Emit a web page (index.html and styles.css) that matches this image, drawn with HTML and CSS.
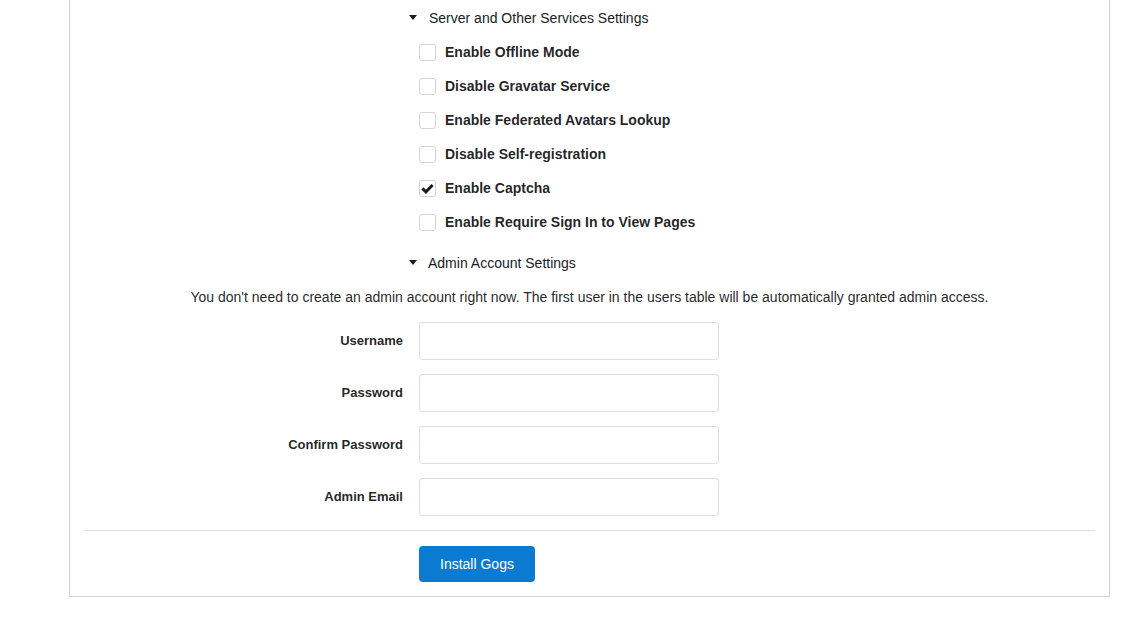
FILE: index.html
```html
<!DOCTYPE html>
<html>
<head>
<meta charset="utf-8">
<link rel="stylesheet" href="styles.css">
</head>
<body>
<div class="segment">
  <div class="section">
    <div class="summary"><span class="caret"></span><span>Server and Other Services Settings</span></div>
    <div class="checks">
      <div class="check"><span class="box"></span><span class="check-label">Enable Offline Mode</span></div>
      <div class="check"><span class="box"></span><span class="check-label">Disable Gravatar Service</span></div>
      <div class="check"><span class="box"></span><span class="check-label">Enable Federated Avatars Lookup</span></div>
      <div class="check"><span class="box"></span><span class="check-label">Disable Self-registration</span></div>
      <div class="check"><span class="box checked"><svg viewBox="0 0 17 17" width="17" height="17"><path d="M3.4 8.4 L6.9 11.9 L13.6 5.0" fill="none" stroke="#1b1c1d" stroke-width="3" stroke-linecap="butt" stroke-linejoin="miter"/></svg></span><span class="check-label">Enable Captcha</span></div>
      <div class="check"><span class="box"></span><span class="check-label">Enable Require Sign In to View Pages</span></div>
    </div>
  </div>
  <div class="section admin">
    <div class="summary"><span class="caret"></span><span>Admin Account Settings</span></div>
    <p class="help">You don't need to create an admin account right now. The first user in the users table will be automatically granted admin access.</p>
    <div class="fields">
      <div class="field"><label class="field-label">Username</label><input class="input" type="text"></div>
      <div class="field"><label class="field-label">Password</label><input class="input" type="password"></div>
      <div class="field"><label class="field-label">Confirm Password</label><input class="input" type="password"></div>
      <div class="field"><label class="field-label">Admin Email</label><input class="input" type="email"></div>
    </div>
  </div>
  <div class="divider"></div>
  <div class="actions"><button class="button">Install Gogs</button></div>
</div>
</body>
</html>
```
FILE: styles.css
```css
html, body {
  margin: 0;
  padding: 0;
  background: #ffffff;
}
body {
  font-family: "Liberation Sans", Arial, sans-serif;
  font-size: 14px;
  color: rgba(0, 0, 0, 0.87);
}
.segment {
  margin-left: 69px;
  width: 1041px;
  box-sizing: border-box;
  border: 1px solid #d4d4d5;
  border-top: none;
  padding: 8px 14px 14px;
}
.summary {
  display: flex;
  align-items: center;
  height: 20px;
  line-height: 20px;
  padding-left: 325px;
  color: #1b1c1d;
}
.caret {
  width: 0;
  height: 0;
  border-left: 4px solid transparent;
  border-right: 4px solid transparent;
  border-top: 5px solid #1b1c1d;
  margin-right: 12px;
  margin-top: -2px;
}
.admin .summary .caret {
  margin-right: 11px;
}
.checks {
  margin-top: 7px;
  display: flex;
  flex-direction: column;
}
.check {
  height: 34px;
  display: flex;
  align-items: center;
  padding-left: 335px;
}
.box {
  width: 17px;
  height: 17px;
  box-sizing: border-box;
  border: 1px solid #d4d4d5;
  border-radius: 3px;
  background: #fff;
  position: relative;
  margin-right: 9px;
  margin-top: 1px;
}
.box svg {
  position: absolute;
  left: -1px;
  top: -1px;
}
.check-label {
  font-weight: bold;
  font-size: 14px;
  color: rgba(0, 0, 0, 0.87);
}
.admin {
  margin-top: 14px;
}
.help {
  margin: 14px 0 0;
  line-height: 20px;
  text-align: center;
  color: rgba(0, 0, 0, 0.87);
}
.fields {
  margin-top: 15px;
  display: flex;
  flex-direction: column;
  gap: 14px;
}
.field {
  display: flex;
  align-items: center;
  gap: 16px;
}
.field-label {
  width: 319px;
  text-align: right;
  font-weight: bold;
  font-size: 13px;
  line-height: 16px;
  margin-top: -1px;
  color: rgba(0, 0, 0, 0.87);
}
.input {
  width: 300px;
  height: 38px;
  box-sizing: border-box;
  border: 1px solid rgba(34, 36, 38, 0.15);
  border-radius: 4px;
  padding: 9px 14px;
  font-family: inherit;
  font-size: 14px;
  outline: none;
  margin: 0;
}
.divider {
  margin-top: 14px;
  height: 0;
  border-top: 1px solid rgba(34, 36, 38, 0.15);
}
.actions {
  margin-top: 15px;
  padding-left: 335px;
}
.button {
  display: block;
  height: 36px;
  padding: 0 21px;
  background: #0b7ad1;
  color: #ffffff;
  border: none;
  border-radius: 4px;
  font-family: "Liberation Sans", Arial, sans-serif;
  font-size: 14px;
  line-height: 36px;
  cursor: pointer;
}
```
